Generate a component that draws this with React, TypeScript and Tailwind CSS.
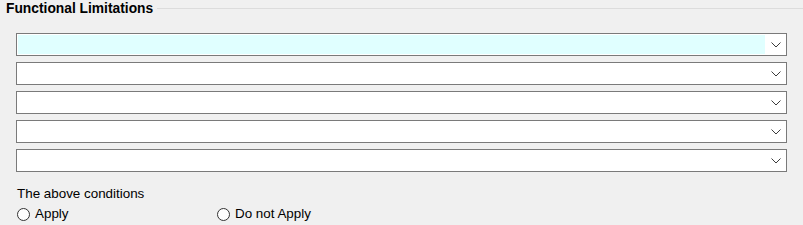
function Combo({ highlight = false }: { highlight?: boolean }) {
  return (
    <div className="flex h-[23px] items-stretch border border-[#7a7a7a] bg-white">
      <div className="flex flex-1 p-px">
        <div className={`flex-1 ${highlight ? 'bg-[#e0ffff]' : 'bg-white'}`} />
      </div>
      <div className="flex w-[20px] items-center justify-center">
        <svg width="10" height="6" viewBox="0 0 10 6" className="mt-px">
          <polyline points="0.5,0.5 5,5 9.5,0.5" fill="none" stroke="#3c3c3c" strokeWidth="1" />
        </svg>
      </div>
    </div>
  )
}

function Radio({ label }: { label: string }) {
  return (
    <label className="flex items-center gap-[5px]">
      <span className="h-[13px] w-[13px] rounded-full border border-[#333] bg-white" />
      <span>{label}</span>
    </label>
  )
}

export default function App() {
  return (
    <div
      className="h-[225px] w-[803px] bg-[#f0f0f0] text-[13.4px] text-black"
      style={{ fontFamily: '"Liberation Sans", Arial, sans-serif' }}
    >
      <div className="flex items-center pl-[6px]">
        <span className="text-[13.8px] font-bold leading-[17px]">Functional Limitations</span>
        <div className="ml-[4px] h-px flex-1 border-t border-[#dcdcdc]" />
      </div>
      <div className="flex flex-col gap-[6px] pl-[16px] pr-[16px] pt-[16px]">
        <Combo highlight />
        <Combo />
        <Combo />
        <Combo />
        <Combo />
      </div>
      <div className="pl-[17px] pt-[14px] leading-[16px]">The above conditions</div>
      <div className="flex pl-[17px] pt-[4px] leading-[16px]">
        <div className="w-[200px]">
          <Radio label="Apply" />
        </div>
        <Radio label="Do not Apply" />
      </div>
    </div>
  )
}
